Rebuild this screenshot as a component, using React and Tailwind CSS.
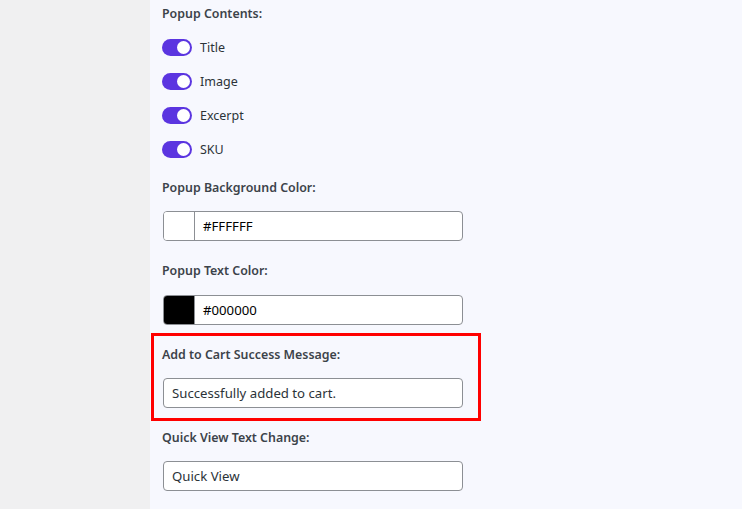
import React from "react";

function Toggle({ label }) {
  return (
    <div className="flex items-center h-[17px]">
      <div className="w-[30px] h-[17px] rounded-full bg-[#5b35e0] flex items-center justify-end pr-[2px]">
        <div className="w-[13px] h-[13px] rounded-full bg-white" />
      </div>
      <span className="ml-[8px] text-[12.5px] text-[#2c3338] leading-[17px]">{label}</span>
    </div>
  );
}

function Label({ children, className = "" }) {
  return (
    <div className={"h-[18px] pt-[1px] leading-[18px] text-[12.4px] font-semibold text-[#3c434a] " + className}>
      {children}
    </div>
  );
}

function ColorInput({ color, value }) {
  return (
    <div className="w-[300px] h-[30px] flex border border-[#8c8f94] rounded-[4px] bg-white overflow-hidden">
      <div className="w-[31px] h-full border-r border-[#8c8f94]" style={{ background: color }} />
      <div className="pl-[8px] pt-[1px] flex items-center text-[13.2px] text-black">{value}</div>
    </div>
  );
}

function TextInput({ value }) {
  return (
    <div className="w-[300px] h-[30px] flex items-center border border-[#8c8f94] rounded-[4px] bg-white pl-[8px] pt-[1px] text-[13.2px] text-[#2c3338]">
      {value}
    </div>
  );
}

export default function App() {
  return (
    <div
      className="flex w-[742px] h-[509px] overflow-hidden bg-[#f0f0f1]"
      style={{ fontFamily: '"Noto Sans", "Open Sans", sans-serif' }}
    >
      <div className="w-[150px] shrink-0 bg-[#f0f0f1]" />
      <div className="flex-1 bg-[#f7f8fe] pl-[12px]">
        <Label className="mt-[4px]">Popup Contents:</Label>
        <div className="mt-[17px] flex flex-col gap-[17px]">
          <Toggle label="Title" />
          <Toggle label="Image" />
          <Toggle label="Excerpt" />
          <Toggle label="SKU" />
        </div>
        <Label className="mt-[20px]">Popup Background Color:</Label>
        <div className="mt-[15px] ml-[1px]">
          <ColorInput color="#ffffff" value="#FFFFFF" />
        </div>
        <Label className="mt-[20px]">Popup Text Color:</Label>
        <div className="mt-[16px] ml-[1px]">
          <ColorInput color="#000000" value="#000000" />
        </div>
        <div className="mt-[8px] ml-[-11px] w-[330px] h-[88px] border-[3px] border-[#ff0000] pl-[8px] pt-[9px]">
          <Label>Add to Cart Success Message:</Label>
          <div className="mt-[15px] ml-[1px]">
            <TextInput value="Successfully added to cart." />
          </div>
        </div>
        <Label className="mt-[7px]">Quick View Text Change:</Label>
        <div className="mt-[15px] ml-[1px]">
          <TextInput value="Quick View" />
        </div>
      </div>
    </div>
  );
}
